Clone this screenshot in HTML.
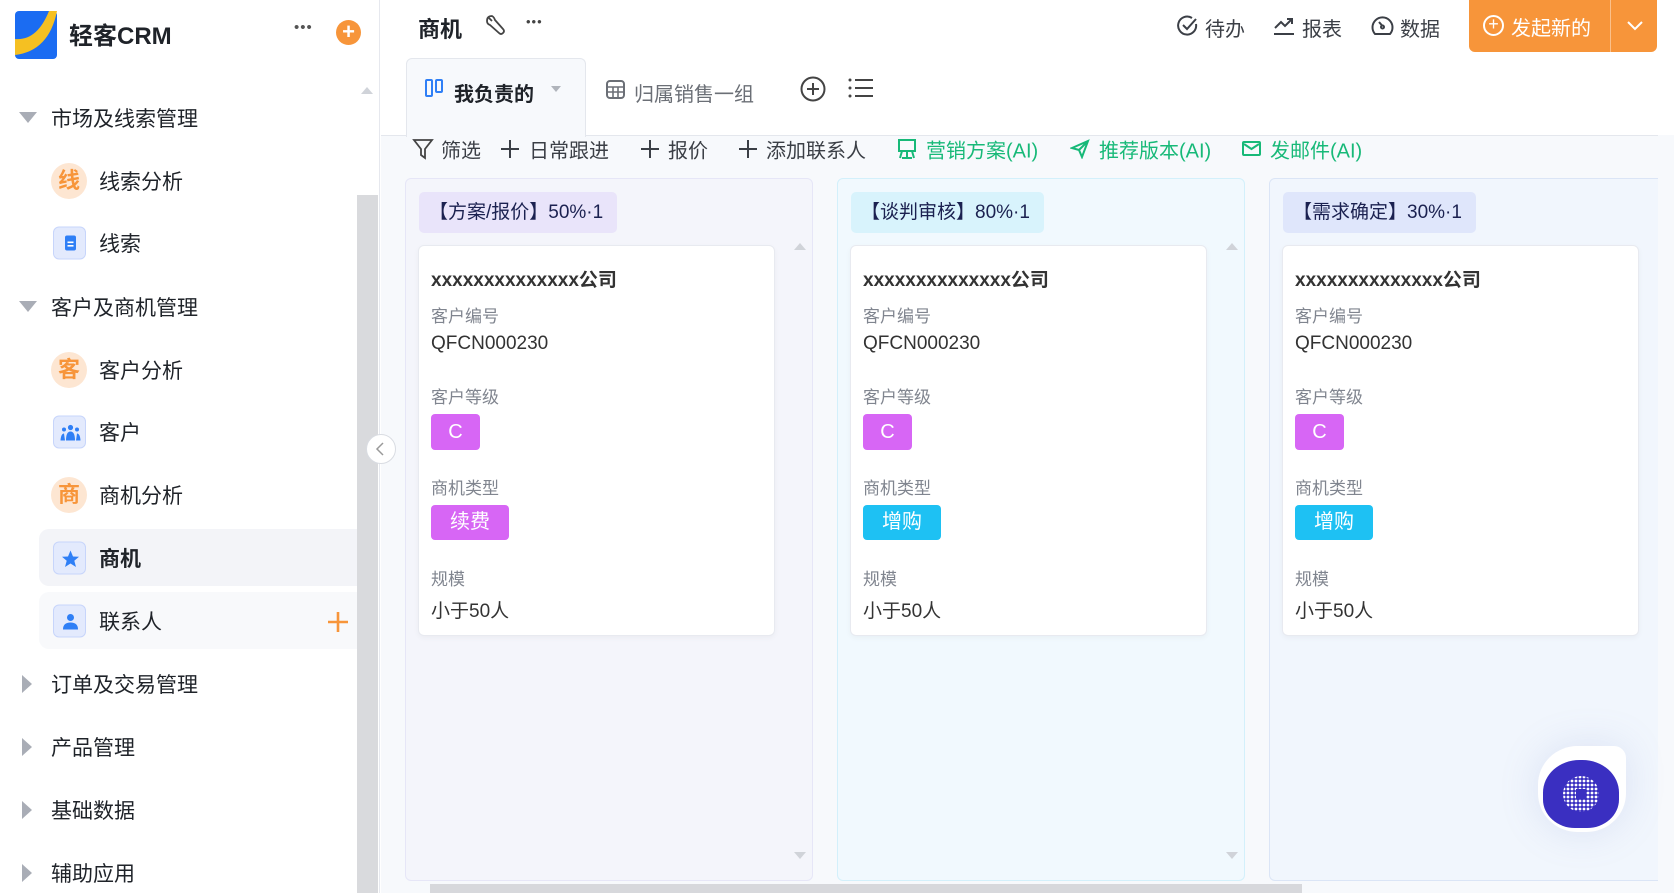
<!DOCTYPE html>
<html><head><meta charset="utf-8"><style>
*{box-sizing:border-box;margin:0;padding:0}
body{width:1674px;height:893px;overflow:hidden;background:#fff;font-family:"Liberation Sans","Noto Sans CJK SC",sans-serif;color:#1f2329;position:relative}
.a{position:absolute}
.side{left:0;top:0;width:380px;height:893px;background:#fff;border-right:1px solid #e6e8ee}
.grp{position:absolute;left:51px;font-size:21px;color:#1f2329;transform:translateY(-50%)}
.tri{position:absolute;left:19px;width:0;height:0}
.tri.d{border-left:9px solid transparent;border-right:9px solid transparent;border-top:11px solid #a9adb6}
.tri.r{border-top:9px solid transparent;border-bottom:9px solid transparent;border-left:10px solid #a9adb6;left:22px}
.it{position:absolute;left:99px;font-size:21px;transform:translateY(-50%)}
.ic{position:absolute;left:51px;width:36px;height:36px;transform:translateY(-50%)}
.circ{border-radius:50%;background:#fde6d2;color:#f7953a;font-weight:bold;font-size:22px;text-align:center;line-height:36px}
.sq{border-radius:6px;background:#e3eafd;border:1px solid #c7d5fb;left:53px;width:33px;height:33px}
.main{left:381px;top:135px;width:1293px;height:758px;background:#f7f9fc;border-top:1px solid #e4e7ed}
.tb{position:absolute;top:149px;font-size:20px;color:#3b3f46;transform:translateY(-50%);white-space:nowrap}
.g{color:#17b978}
.col{position:absolute;top:178px;height:703px;border-radius:6px}
.lab{position:absolute;top:13px;left:13px;height:41px;border-radius:5px;font-size:19px;color:#1b2150;line-height:41px;padding:0 14px 0 10px}
.card{position:absolute;top:66px;left:12px;width:357px;height:391px;background:#fff;border-radius:6px;border:1px solid #e8eaf0;box-shadow:0 2px 6px rgba(0,0,0,.04)}
.card div{position:absolute;left:12px;white-space:nowrap}
.t1{top:19px;font-size:19px;font-weight:bold;color:#333}
.lb{font-size:17px;color:#80858f}
.vl{font-size:19px;color:#333}
.bd{color:#fff;border-radius:4px;text-align:center}
.up,.dn{position:absolute;width:0;height:0;border-left:6px solid transparent;border-right:6px solid transparent}
.up{border-bottom:7px solid #d0d3d9}.dn{border-top:7px solid #d0d3d9}
.hd{position:absolute;top:13px;font-size:20px;color:#3b3f46}
</style></head><body>
<div class="a side">
 <svg class="a" style="left:15px;top:11px" width="42" height="48" viewBox="0 0 42 48"><rect width="42" height="48" rx="4" fill="#1b6cf2"/><path d="M0 28 Q22 30 34 0 L42 0 Q34 40 0 44Z" fill="#f5c022"/></svg>
 <div class="a" style="left:69px;top:16px;font-size:24px;font-weight:bold;color:#1f2329">轻客CRM</div>
 <div class="a" style="left:294px;top:19px;font-size:15px;letter-spacing:1px;color:#555">•••</div>
 <div class="a" style="left:336px;top:20px;width:25px;height:25px;border-radius:50%;background:#f7953a;color:#fff;text-align:center;font-size:22px;line-height:24px;font-weight:bold">+</div>
 <div class="up" style="left:361px;top:87px"></div>
 <div class="a" style="left:357px;top:195px;width:21px;height:698px;background:#d9dadd"></div>
 <div class="tri d" style="top:112px"></div><div class="grp" style="top:118px">市场及线索管理</div>
 <div class="ic circ" style="top:181px">线</div><div class="it" style="top:181px">线索分析</div>
 <div class="ic sq" style="top:243px"><svg width="33" height="33"><rect x="11" y="8" width="11" height="15" rx="2" fill="#2f7ff6"/><rect x="13.5" y="14" width="6" height="1.6" fill="#fff"/><rect x="13.5" y="17.5" width="6" height="1.6" fill="#fff"/></svg></div><div class="it" style="top:243px">线索</div>
 <div class="tri d" style="top:301px"></div><div class="grp" style="top:307px">客户及商机管理</div>
 <div class="ic circ" style="top:370px">客</div><div class="it" style="top:370px">客户分析</div>
 <div class="ic sq" style="top:432px"><svg width="33" height="33"><circle cx="16.5" cy="11" r="2.6" fill="#2f7ff6"/><circle cx="10" cy="13" r="2" fill="#2f7ff6"/><circle cx="23" cy="13" r="2" fill="#2f7ff6"/><path d="M12 24 Q12 15 16.5 15 Q21 15 21 24Z M6.5 24 Q7 17 10 17 L11 24Z M26.5 24 Q26 17 23 17 L22 24Z" fill="#2f7ff6"/></svg></div><div class="it" style="top:432px">客户</div>
 <div class="ic circ" style="top:495px">商</div><div class="it" style="top:495px">商机分析</div>
 <div class="a" style="left:39px;top:529px;width:318px;height:57px;background:#f3f4f8;border-radius:10px 0 0 10px"></div>
 <div class="ic sq" style="top:558px"><svg width="33" height="33"><path d="M16.5 8 L19 14 L25 14.3 L20.3 18.3 L22 24.5 L16.5 21 L11 24.5 L12.7 18.3 L8 14.3 L14 14Z" fill="#2f7ff6"/></svg></div><div class="it" style="top:558px;font-weight:bold">商机</div>
 <div class="a" style="left:39px;top:592px;width:318px;height:57px;background:#f8f9fb;border-radius:10px 0 0 10px"></div>
 <div class="ic sq" style="top:621px"><svg width="33" height="33"><circle cx="16.5" cy="12" r="3.5" fill="#2f7ff6"/><path d="M9 24 Q9 17 16.5 17 Q24 17 24 24Z" fill="#2f7ff6"/></svg></div><div class="it" style="top:621px">联系人</div>
 <svg class="a" style="left:327px;top:611px" width="22" height="22"><path d="M11 1V21M1 11H21" stroke="#f7953a" stroke-width="2.6"/></svg>
 <div class="tri r" style="top:675px"></div><div class="grp" style="top:684px">订单及交易管理</div>
 <div class="tri r" style="top:738px"></div><div class="grp" style="top:747px">产品管理</div>
 <div class="tri r" style="top:801px"></div><div class="grp" style="top:810px">基础数据</div>
 <div class="tri r" style="top:864px"></div><div class="grp" style="top:873px">辅助应用</div>
</div>

<div class="a" style="left:418px;top:12px;font-size:22px;font-weight:bold">商机</div>
<svg class="a" style="left:484px;top:14px" width="22" height="22" viewBox="0 0 22 22" fill="none" stroke="#444" stroke-width="1.8"><path d="M8 2 Q3 2 3 7 Q3 10 6 11 L15 19 Q17 21 19 19 Q21 17 19 15 L11 6 Q10 3 8 2Z M5 4 L8 7"/></svg>
<div class="a" style="left:526px;top:14px;font-size:13px;letter-spacing:1px;color:#444">•••</div>
<svg class="a" style="left:1177px;top:15px" width="22" height="22" fill="none" stroke="#3b3f46" stroke-width="2"><path d="M19 9 A9 9 0 1 1 15 3"/><path d="M6 10 L10 14 L19 4"/></svg>
<div class="hd" style="left:1205px">待办</div>
<svg class="a" style="left:1273px;top:16px" width="22" height="20" fill="none" stroke="#3b3f46" stroke-width="2"><path d="M2 12 L8 6 L12 10 L19 3 M14 3H19V8 M1 18H21"/></svg>
<div class="hd" style="left:1302px">报表</div>
<svg class="a" style="left:1371px;top:15px" width="23" height="22" fill="none" stroke="#3b3f46" stroke-width="2"><path d="M4 19 A10 10 0 1 1 19 19 Z"/><path d="M11.5 11 L8 7"/><circle cx="11.5" cy="12" r="1.5"/></svg>
<div class="hd" style="left:1400px">数据</div>
<div class="a" style="left:1469px;top:0;width:188px;height:52px;background:#f7953a;border-radius:0 0 6px 6px;color:#fff;font-size:20px">
 <div class="a" style="left:14px;top:15px;width:21px;height:21px;border:2px solid #fff;border-radius:50%;text-align:center;line-height:15px;font-size:18px">+</div>
 <div class="a" style="left:42px;top:12px">发起新的</div>
 <div class="a" style="left:141px;top:0;width:1px;height:52px;background:#fbc08a"></div>
 <svg class="a" style="left:157px;top:20px" width="18" height="12"><path d="M2 2 L9 9 L16 2" stroke="#fff" stroke-width="2" fill="none"/></svg>
</div>

<div class="a main"></div>
<div class="a" style="left:366px;top:434px;width:30px;height:30px;border-radius:50%;background:#fff;border:1px solid #d9dce2;z-index:5"><svg width="28" height="28"><path d="M16 8 L10 14 L16 20" stroke="#999" stroke-width="1.5" fill="none"/></svg></div>
<div class="a" style="left:406px;top:58px;width:180px;height:79px;background:#f7f9fc;border:1px solid #e4e7ed;border-bottom:none;border-radius:6px 6px 0 0"></div>
<svg class="a" style="left:425px;top:79px" width="20" height="20"><rect x="1" y="1" width="6" height="16" rx="1" stroke="#2f7ff6" stroke-width="2" fill="none"/><rect x="11" y="1" width="6" height="12" rx="1" stroke="#2f7ff6" stroke-width="2" fill="none"/></svg>
<div class="a" style="left:454px;top:78px;font-size:20px;font-weight:bold">我负责的</div>
<div class="a" style="left:551px;top:86px;border-left:5px solid transparent;border-right:5px solid transparent;border-top:6px solid #b0b4bb"></div>
<svg class="a" style="left:606px;top:80px" width="20" height="20"><rect x="1" y="1" width="17" height="17" rx="3" stroke="#6b6f76" stroke-width="2" fill="none"/><path d="M1 7H18M1 12H18M7 7V18M12 7V18" stroke="#6b6f76" stroke-width="1.6"/></svg>
<div class="a" style="left:634px;top:78px;font-size:20px;color:#6b6f76">归属销售一组</div>
<svg class="a" style="left:800px;top:76px" width="26" height="26" fill="none" stroke="#444" stroke-width="2"><circle cx="13" cy="13" r="11.5"/><path d="M13 7V19M7 13H19"/></svg>
<svg class="a" style="left:848px;top:77px" width="26" height="22"><g fill="#444"><circle cx="2" cy="3" r="1.5"/><circle cx="2" cy="11" r="1.5"/><circle cx="2" cy="19" r="1.5"/><rect x="7" y="2" width="18" height="2"/><rect x="7" y="10" width="18" height="2"/><rect x="7" y="18" width="18" height="2"/></g></svg>

<svg class="a" style="left:412px;top:137px" width="22" height="24"><path d="M2 3H20L13 12V21L9 18V12Z" stroke="#444" stroke-width="1.8" fill="none"/></svg>
<div class="tb" style="left:441px">筛选</div>
<svg class="a" style="left:500px;top:139px" width="20" height="20"><path d="M10 1V19M1 10H19" stroke="#3b3f46" stroke-width="2"/></svg>
<div class="tb" style="left:529px">日常跟进</div>
<svg class="a" style="left:640px;top:139px" width="20" height="20"><path d="M10 1V19M1 10H19" stroke="#3b3f46" stroke-width="2"/></svg>
<div class="tb" style="left:668px">报价</div>
<svg class="a" style="left:738px;top:139px" width="20" height="20"><path d="M10 1V19M1 10H19" stroke="#3b3f46" stroke-width="2"/></svg>
<div class="tb" style="left:766px">添加联系人</div>
<svg class="a" style="left:897px;top:138px" width="20" height="22"><path d="M2 2H18V13H2Z M10 13V20 M5 20H15 M5 13L3 20 M15 13L17 20" stroke="#17b978" stroke-width="2" fill="none"/></svg>
<div class="tb g" style="left:926px">营销方案(AI)</div>
<svg class="a" style="left:1070px;top:139px" width="20" height="20"><path d="M2 9L18 2L12 18L9 11Z M9 11L18 2" stroke="#17b978" stroke-width="2" fill="none"/></svg>
<div class="tb g" style="left:1099px">推荐版本(AI)</div>
<svg class="a" style="left:1242px;top:140px" width="20" height="18"><rect x="1" y="2" width="17" height="13" rx="1" stroke="#17b978" stroke-width="2" fill="none"/><path d="M2 4L9.5 9L17 4" stroke="#17b978" stroke-width="2" fill="none"/></svg>
<div class="tb g" style="left:1270px">发邮件(AI)</div>

<div class="col" style="left:405px;width:408px;background:#f4f5fb;border:1px solid #e6e6f7">
 <div class="lab" style="background:#e9e4fa">【方案/报价】50%·1</div>
 <div class="up" style="left:388px;top:64px"></div><div class="dn" style="left:388px;top:673px"></div>
 <div class="card"><div class="t1">xxxxxxxxxxxxxx公司</div><div class="lb" style="top:56px">客户编号</div><div class="vl" style="top:87px">QFCN000230</div><div class="lb" style="top:137px">客户等级</div><div class="bd" style="top:168px;width:49px;height:36px;line-height:36px;background:#d766f5;font-size:20px">C</div><div class="lb" style="top:228px">商机类型</div><div class="bd" style="top:259px;width:78px;height:35px;line-height:35px;background:#d766f5;font-size:20px">续费</div><div class="lb" style="top:319px">规模</div><div class="vl" style="top:350px">小于50人</div></div>
</div>
<div class="col" style="left:837px;width:408px;background:#f1f9fe;border:1px solid #d3f0fb">
 <div class="lab" style="background:#d8f3fc">【谈判审核】80%·1</div>
 <div class="up" style="left:388px;top:64px"></div><div class="dn" style="left:388px;top:673px"></div>
 <div class="card"><div class="t1">xxxxxxxxxxxxxx公司</div><div class="lb" style="top:56px">客户编号</div><div class="vl" style="top:87px">QFCN000230</div><div class="lb" style="top:137px">客户等级</div><div class="bd" style="top:168px;width:49px;height:36px;line-height:36px;background:#d766f5;font-size:20px">C</div><div class="lb" style="top:228px">商机类型</div><div class="bd" style="top:259px;width:78px;height:35px;line-height:35px;background:#1ec1f3;font-size:20px">增购</div><div class="lb" style="top:319px">规模</div><div class="vl" style="top:350px">小于50人</div></div>
</div>
<div class="col" style="left:1269px;width:400px;background:#f1f6fd;border:1px solid #dbe5f6">
 <div class="lab" style="background:#dfe6fb">【需求确定】30%·1</div>
 <div class="card"><div class="t1">xxxxxxxxxxxxxx公司</div><div class="lb" style="top:56px">客户编号</div><div class="vl" style="top:87px">QFCN000230</div><div class="lb" style="top:137px">客户等级</div><div class="bd" style="top:168px;width:49px;height:36px;line-height:36px;background:#d766f5;font-size:20px">C</div><div class="lb" style="top:228px">商机类型</div><div class="bd" style="top:259px;width:78px;height:35px;line-height:35px;background:#1ec1f3;font-size:20px">增购</div><div class="lb" style="top:319px">规模</div><div class="vl" style="top:350px">小于50人</div></div>
</div>
<div class="a" style="left:1658px;top:135px;width:16px;height:758px;background:#f7f9fc"></div>
<div class="a" style="left:430px;top:884px;width:872px;height:9px;background:#d7d8dc"></div>

<div class="a" style="left:1538px;top:746px;width:88px;height:86px;background:#fff;border-radius:45% 12px 45% 45%;box-shadow:0 0 40px rgba(120,140,200,.18)"></div>
<div class="a" style="left:1543px;top:760px;width:76px;height:68px;background:#3a2fc1;border-radius:48% 48% 42% 42%"></div>
<svg class="a" style="left:1562px;top:775px" width="38" height="38"><defs><pattern id="p" width="4" height="4" patternUnits="userSpaceOnUse"><circle cx="2" cy="2" r="1.4" fill="#fff"/></pattern></defs><circle cx="19" cy="19" r="18" fill="url(#p)"/><rect x="14" y="14" width="10" height="10" fill="#3a2fc1"/></svg>
</body></html>
